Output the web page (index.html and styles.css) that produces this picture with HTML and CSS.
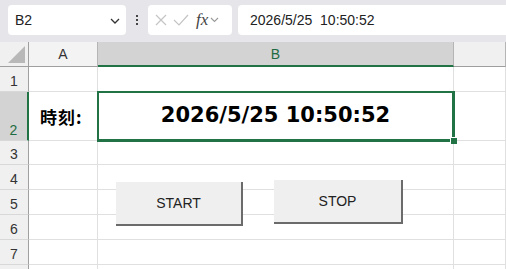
FILE: index.html
```html
<!DOCTYPE html>
<html lang="ja">
<head>
    <meta charset="UTF-8">
    <title>時刻</title>
    <link rel="stylesheet" href="styles.css">
</head>
<body>
    <div class="toolbar">
        <div class="namebox">
            <span>B2</span>
            <svg class="chev" width="10" height="6" viewBox="0 0 10 6"><path d="M1 1l4 4 4-4" fill="none" stroke="#333" stroke-width="1.3"/></svg>
        </div>
        <div class="dots"><i></i><i></i><i></i></div>
        <div class="fxbox">
            <svg width="14" height="14" viewBox="0 0 14 14"><path d="M2 2l10 10M12 2L2 12" stroke="#c4c4c4" stroke-width="1.2"/></svg>
            <svg width="16" height="14" viewBox="0 0 16 14"><path d="M1 7l5 5L15 2" fill="none" stroke="#c4c4c4" stroke-width="1.2"/></svg>
            <span class="fx">fx</span>
            <svg width="9" height="6" viewBox="0 0 9 6"><path d="M1 1l3.5 3.5L8 1" fill="none" stroke="#999" stroke-width="1.1"/></svg>
        </div>
        <div class="formula">2026/5/25&nbsp; 10:50:52</div>
    </div>

    <div class="sheet">
        <div class="row head">
            <div class="rh corner"><span class="tri"></span></div>
            <div class="c ca">A</div>
            <div class="c cb sel">B</div>
            <div class="c rest"></div>
        </div>
        <div class="row">
            <div class="rh">1</div>
            <div class="c ca"></div>
            <div class="c cb"></div>
            <div class="c rest"></div>
        </div>
        <div class="row r2">
            <div class="rh sel">2</div>
            <div class="c ca label">時刻:</div>
            <div class="c cb active">2026/5/25 10:50:52<span class="handle"></span></div>
            <div class="c rest"></div>
        </div>
        <div class="row r3"><div class="rh">3</div><div class="c ca"></div><div class="c cb"></div><div class="c rest"></div></div>
        <div class="row"><div class="rh">4</div><div class="c ca"></div><div class="c cb"></div><div class="c rest"></div></div>
        <div class="row"><div class="rh">5</div><div class="c ca"></div><div class="c cb"></div><div class="c rest"></div></div>
        <div class="row"><div class="rh">6</div><div class="c ca"></div><div class="c cb"></div><div class="c rest"></div></div>
        <div class="row"><div class="rh">7</div><div class="c ca"></div><div class="c cb"></div><div class="c rest"></div></div>
        <div class="row"><div class="rh"></div><div class="c ca"></div><div class="c cb"></div><div class="c rest"></div></div>

        <button class="btn start">START</button>
        <button class="btn stop">STOP</button>
    </div>
</body>
</html>
```

FILE: styles.css
```css
body {
    margin: 0;
    width: 506px;
    height: 269px;
    overflow: hidden;
    background: #fff;
    font-family: "Liberation Sans", Arial, sans-serif;
}

.toolbar {
    height: 42px;
    background: #e6e6ea;
    display: flex;
    align-items: flex-start;
    padding: 5px 0 0 8px;
    box-sizing: border-box;
}

.namebox {
    width: 118px;
    height: 30px;
    background: #fff;
    border-radius: 4px;
    display: flex;
    align-items: center;
    justify-content: space-between;
    padding: 0 6px 0 7px;
    box-sizing: border-box;
    font-size: 14px;
    color: #222;
}

.chev {
    margin-top: 1px;
}

.dots {
    width: 22px;
    height: 30px;
    display: flex;
    flex-direction: column;
    align-items: center;
    justify-content: center;
    gap: 2px;
}

.dots i {
    width: 2px;
    height: 2px;
    background: #444;
}

.fxbox {
    width: 84px;
    height: 30px;
    background: #fff;
    border-radius: 4px;
    display: flex;
    align-items: center;
    gap: 5px;
    padding-left: 6px;
    box-sizing: border-box;
}

.fx {
    font-family: "Liberation Serif", serif;
    font-style: italic;
    font-size: 17px;
    color: #444;
    margin-left: 2px;
    margin-right: -3px;
}

.formula {
    flex: 1;
    height: 30px;
    margin-left: 6px;
    background: #fff;
    border-radius: 4px 0 0 4px;
    display: flex;
    align-items: center;
    padding-left: 12px;
    font-size: 14px;
    color: #222;
}

.sheet {
    position: relative;
}

.row {
    display: flex;
    height: 25px;
}

.row.r2 {
    height: 49px;
}

.row.r3 {
    height: 24px;
}

.rh {
    width: 29px;
    flex: none;
    box-sizing: border-box;
    background: #f0f0f0;
    border-right: 1px solid #9f9f9f;
    border-bottom: 1px solid #d8d8d8;
    display: flex;
    align-items: flex-end;
    justify-content: center;
    padding-bottom: 2px;
    font-size: 14px;
    color: #333;
}

.rh.sel {
    background: #d3d3d3;
    border-right: 2px solid #217346;
    color: #1e6b41;
}

.corner {
    position: relative;
    border-bottom: 1px solid #9f9f9f;
    background: #f0f0f0;
}

.tri {
    position: absolute;
    right: 3px;
    bottom: 3px;
    width: 0;
    height: 0;
    border-left: 17px solid transparent;
    border-bottom: 17px solid #b8b8b8;
}

.c {
    flex: none;
    box-sizing: border-box;
    border-right: 1px solid #e0e0e0;
    border-bottom: 1px solid #e0e0e0;
}

.ca {
    width: 69px;
}

.cb {
    width: 356px;
}

.rest {
    flex: 1;
}

.head .c {
    background: #f3f3f3;
    border-right: 1px solid #b5b5b5;
    border-bottom: 1px solid #9f9f9f;
    display: flex;
    align-items: center;
    justify-content: center;
    font-size: 14px;
    color: #333;
}

.head .cb.sel {
    background: #d3d3d3;
    color: #1e6b41;
    border-bottom: 2px solid #217346;
}

.head .rest {
    background: #f0f0f0;
}

.label {
    display: flex;
    align-items: center;
    padding-left: 11px;
    font-family: "Noto Sans CJK JP", sans-serif;
    font-weight: bold;
    font-size: 17px;
    letter-spacing: 1px;
    color: #000;
}

.active {
    position: relative;
    display: flex;
    align-items: center;
    justify-content: center;
    font-family: "DejaVu Sans", sans-serif;
    font-weight: bold;
    font-size: 21px;
    color: #000;
    padding-bottom: 2px;
    box-shadow: 0 0 0 1px #217346, inset 0 0 0 1px #217346;
    border-color: #217346;
}

.handle {
    position: absolute;
    right: -4px;
    bottom: -4px;
    width: 6px;
    height: 6px;
    background: #217346;
    border: 1px solid #fff;
    border-right: none;
    border-bottom: none;
}

.btn {
    position: absolute;
    height: 44px;
    background: #efefef;
    border: none;
    border-right: 2px solid #6b6b6b;
    border-bottom: 2px solid #6b6b6b;
    font-family: "Liberation Sans", Arial, sans-serif;
    font-size: 14px;
    color: #222;
    padding: 0;
}

.start {
    left: 116px;
    top: 140px;
    width: 127px;
}

.stop {
    left: 274px;
    top: 138px;
    width: 129px;
}
```
